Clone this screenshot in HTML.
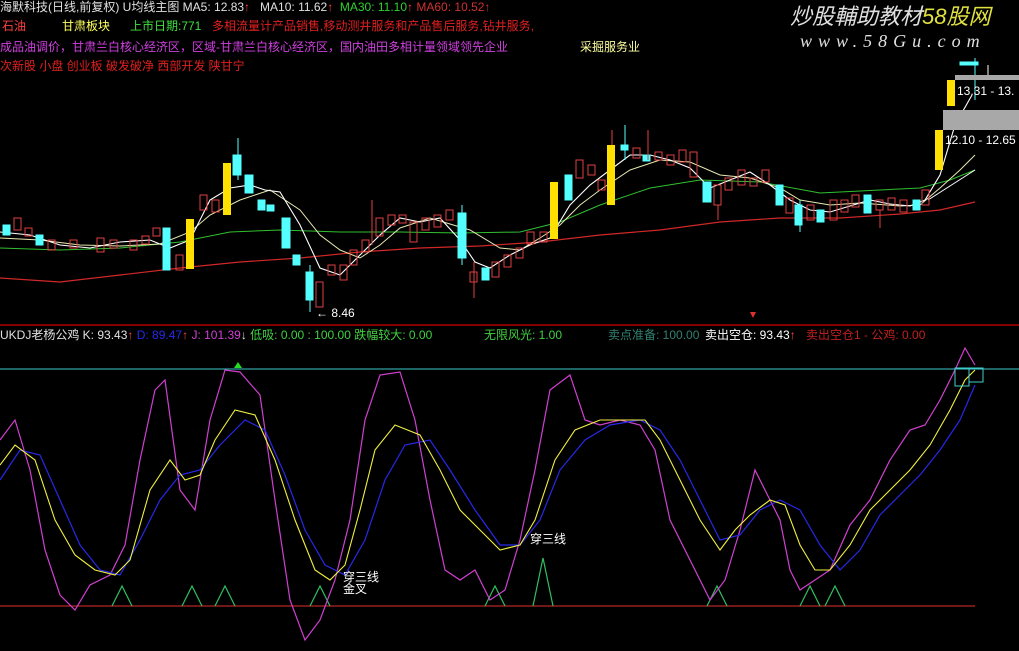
<!DOCTYPE html>
<html><head><meta charset="utf-8"><style>
body{margin:0;background:#000;width:1019px;height:651px;overflow:hidden;font-family:"Liberation Sans","Noto Sans CJK SC",sans-serif;}
.t{position:absolute;font-size:12px;white-space:nowrap;line-height:14px}
</style></head><body>
<svg width="1019" height="651" style="position:absolute;left:0;top:0">
<line x1="0" y1="325" x2="1019" y2="325" stroke="#b00000" stroke-width="1.5"/>
<line x1="0" y1="369" x2="1019" y2="369" stroke="#3cc8c8" stroke-width="1"/>
<line x1="0" y1="606" x2="975" y2="606" stroke="#e03030" stroke-width="1"/>
<!-- MA lines -->
<polyline fill="none" stroke="#d02828" stroke-width="1.2" points="0,278 60,282 120,275 180,268 240,262 300,258 360,252 420,248 480,246 540,242 600,235 660,230 720,222 780,218 840,218 900,214 940,210 975,202"/>
<polyline fill="none" stroke="#30c030" stroke-width="1" points="0,248 60,250 120,248 180,242 230,232 280,230 340,232 400,232 460,233 520,232 560,222 600,205 650,188 700,180 760,182 820,193 880,190 920,188 950,180 975,170"/>
<polyline fill="none" stroke="#e8e8b0" stroke-width="1" points="0,238 40,240 80,245 120,246 160,244 190,232 210,215 240,200 270,190 300,210 320,235 340,250 360,258 380,245 400,228 430,218 470,230 500,248 520,250 540,238 560,225 580,205 600,190 630,170 660,160 690,162 720,175 750,178 780,188 800,200 830,205 860,203 900,206 920,205 940,188 960,170 975,155"/>
<polyline fill="none" stroke="#ffffff" stroke-width="1.1" points="0,232 30,235 60,245 90,248 120,242 150,240 170,248 190,240 210,200 230,188 250,185 265,190 280,192 300,225 320,268 340,275 360,255 380,235 400,218 420,222 440,218 460,240 475,262 490,268 510,255 530,245 550,238 570,205 590,185 610,170 630,155 650,155 670,160 690,168 710,188 730,180 750,172 770,185 790,200 810,210 830,212 850,206 870,200 890,204 910,206 925,200 940,175 955,125 972,95"/>
<line x1="928" y1="200" x2="975" y2="170" stroke="#fff" stroke-width="1"/>
<!-- candles cyan -->
<g fill="#54ffff" stroke="#54ffff">
<rect x="3" y="225" width="7" height="10"/><rect x="36" y="235" width="7" height="10"/><rect x="163" y="228" width="7" height="42"/>
<rect x="233" y="155" width="8" height="20"/><rect x="245" y="175" width="8" height="18"/><rect x="258" y="200" width="7" height="10"/><rect x="267" y="205" width="7" height="6"/>
<rect x="282" y="218" width="8" height="30"/><rect x="293" y="255" width="7" height="10"/><rect x="306" y="272" width="7" height="28"/>
<rect x="458" y="213" width="8" height="45"/><rect x="482" y="268" width="7" height="12"/>
<rect x="565" y="175" width="7" height="25"/><rect x="621" y="145" width="7" height="5"/><rect x="643" y="155" width="7" height="6"/>
<rect x="703" y="182" width="8" height="20"/><rect x="776" y="185" width="7" height="20"/><rect x="795" y="205" width="7" height="20"/><rect x="817" y="210" width="7" height="12"/>
<rect x="864" y="195" width="7" height="18"/><rect x="913" y="200" width="7" height="10"/><rect x="960" y="62" width="18" height="3"/>
</g>
<g stroke="#54ffff" stroke-width="1"><line x1="238" y1="138" x2="238" y2="180"/><line x1="310" y1="265" x2="310" y2="312"/><line x1="462" y1="205" x2="462" y2="265"/><line x1="625" y1="125" x2="625" y2="160"/><line x1="975" y1="58" x2="975" y2="100"/><line x1="800" y1="200" x2="800" y2="232"/></g>
<!-- candles red hollow -->
<g fill="none" stroke="#e04040" stroke-width="1">
<rect x="14" y="218" width="7" height="12"/><rect x="25" y="228" width="7" height="8"/><rect x="48" y="240" width="7" height="10"/><rect x="70" y="240" width="7" height="8"/><rect x="97" y="238" width="7" height="14"/><rect x="110" y="240" width="7" height="8"/><rect x="130" y="240" width="7" height="10"/><rect x="142" y="236" width="7" height="8"/><rect x="153" y="228" width="7" height="8"/><rect x="176" y="255" width="7" height="15"/>
<rect x="200" y="195" width="7" height="15"/><rect x="212" y="200" width="7" height="12"/><rect x="316" y="282" width="7" height="25"/><rect x="328" y="265" width="7" height="10"/><rect x="340" y="265" width="7" height="15"/><rect x="350" y="250" width="7" height="15"/><rect x="362" y="240" width="7" height="12"/><rect x="376" y="218" width="7" height="18"/><rect x="388" y="215" width="7" height="10"/><rect x="399" y="215" width="7" height="8"/><rect x="410" y="222" width="7" height="20"/><rect x="422" y="218" width="7" height="12"/><rect x="434" y="215" width="7" height="12"/><rect x="446" y="210" width="7" height="10"/>
<rect x="470" y="272" width="7" height="10"/><rect x="492" y="262" width="7" height="15"/><rect x="504" y="255" width="7" height="12"/><rect x="516" y="248" width="7" height="10"/><rect x="527" y="232" width="7" height="12"/><rect x="540" y="232" width="7" height="10"/>
<rect x="576" y="160" width="7" height="18"/><rect x="588" y="165" width="7" height="10"/><rect x="598" y="180" width="7" height="10"/><rect x="633" y="148" width="7" height="10"/><rect x="655" y="152" width="7" height="8"/><rect x="667" y="155" width="7" height="10"/><rect x="679" y="150" width="7" height="12"/><rect x="690" y="152" width="7" height="25"/>
<rect x="714" y="185" width="7" height="20"/><rect x="725" y="178" width="7" height="12"/><rect x="738" y="170" width="7" height="15"/><rect x="750" y="178" width="7" height="8"/><rect x="762" y="170" width="7" height="12"/><rect x="786" y="198" width="7" height="15"/><rect x="807" y="205" width="7" height="15"/><rect x="830" y="200" width="7" height="20"/><rect x="841" y="200" width="7" height="12"/><rect x="852" y="195" width="7" height="12"/><rect x="876" y="200" width="7" height="10"/><rect x="888" y="198" width="7" height="12"/><rect x="900" y="200" width="7" height="12"/><rect x="922" y="190" width="7" height="15"/>
<line x1="474" y1="262" x2="474" y2="298"/><line x1="372" y1="200" x2="372" y2="245"/><line x1="612" y1="130" x2="612" y2="160"/><line x1="648" y1="130" x2="648" y2="160"/><line x1="880" y1="210" x2="880" y2="228"/><line x1="718" y1="205" x2="718" y2="220"/>
</g>
<!-- yellow -->
<g fill="#ffe000"><rect x="186" y="219" width="8" height="50"/><rect x="223" y="163" width="8" height="52"/><rect x="550" y="182" width="8" height="57"/><rect x="607" y="145" width="8" height="60"/><rect x="935" y="130" width="8" height="40"/><rect x="947" y="80" width="8" height="26"/></g>
<!-- gray zones -->
<rect x="955" y="75" width="64" height="5" fill="#a8a8a8"/><rect x="943" y="110" width="76" height="20" fill="#a8a8a8"/>
<line x1="988" y1="65" x2="988" y2="75" stroke="#fff"/>
<!-- bottom -->
<g fill="none" stroke="#30c060" stroke-width="1.2">
<polyline points="112,606 122,586 132,606"/><polyline points="182,606 192,586 202,606"/><polyline points="215,606 225,586 235,606"/><polyline points="310,606 320,586 330,606"/><polyline points="485,606 495,586 505,606"/><polyline points="533,606 543,558 553,606"/><polyline points="707,606 717,586 727,606"/><polyline points="800,606 810,586 820,606"/><polyline points="825,606 835,586 845,606"/>
</g>
<polyline fill="none" stroke="#d040d0" stroke-width="1.2" points="0,440 15,420 30,470 45,550 60,595 75,610 90,585 110,575 125,545 140,460 155,390 165,380 180,490 195,510 210,420 225,370 240,372 260,395 275,500 290,600 305,640 320,620 335,580 350,520 365,420 380,375 400,372 415,420 430,500 445,570 460,580 475,570 490,600 505,590 520,540 535,470 550,390 570,375 585,420 600,425 620,420 640,425 655,450 670,520 690,560 710,600 725,580 740,530 755,470 765,490 780,520 790,570 800,590 815,580 830,570 850,525 870,500 890,460 910,430 925,425 940,400 955,370 965,348 975,365"/>
<polyline fill="none" stroke="#2828e8" stroke-width="1.2" points="0,480 20,450 40,455 60,500 80,545 100,570 120,575 140,540 160,500 180,475 200,470 220,445 245,420 265,430 285,475 305,530 325,565 345,575 365,540 385,480 405,445 430,440 450,470 475,510 500,545 520,545 540,520 560,470 585,440 610,425 640,420 660,430 680,460 700,500 720,540 740,535 760,510 780,500 800,510 820,545 840,570 860,550 880,515 900,495 920,475 940,450 960,420 975,385"/>
<polyline fill="none" stroke="#f0f040" stroke-width="1.1" points="0,465 15,445 35,460 55,520 75,555 95,570 115,575 130,560 150,490 170,460 185,480 200,475 215,440 235,410 255,415 275,460 295,520 315,570 330,580 345,565 360,510 375,450 395,425 420,435 440,470 460,510 480,530 500,550 520,545 535,520 555,460 575,430 600,420 625,420 645,420 660,440 680,480 700,520 720,550 735,530 750,515 770,500 785,505 800,545 815,570 830,570 850,545 870,510 890,490 910,470 930,445 950,410 965,380 975,370"/>
<rect x="955" y="368" width="14" height="18" fill="none" stroke="#40d0d0"/><rect x="969" y="368" width="14" height="14" fill="none" stroke="#40d0d0"/>
<polygon points="234,368 242,368 238,362" fill="#20e020"/>
<polygon points="750,312 756,312 753,318" fill="#e03030"/>
</svg>
<div class="t" style="left:0;top:1;color:#e0e0e0">海默科技(日线,前复权) U均线主图 <span>MA5: 12.83</span><span style="color:#f44">↑</span> &nbsp; MA10: 11.62<span style="color:#f44">↑</span> &nbsp;<span style="color:#30d030">MA30: 11.10</span><span style="color:#f44">↑</span> <span style="color:#d03030">MA60: 10.52↑</span></div>
<div class="t" style="left:2;top:19px;left:2px;color:#ff4040">石油</div>
<div class="t" style="left:62px;top:19px;color:#ffff60">甘肃板块</div>
<div class="t" style="left:130px;top:19px;color:#40e040">上市日期:771</div>
<div class="t" style="left:212px;top:19px;color:#e02020">多相流量计产品销售,移动测井服务和产品售后服务,钻井服务,</div>
<div class="t" style="left:0;top:40px;color:#d040e0">成品油调价，甘肃兰白核心经济区，区域-甘肃兰白核心经济区，国内油田多相计量领域领先企业</div>
<div class="t" style="left:580px;top:40px;color:#ffffa0">采掘服务业</div>
<div class="t" style="left:0;top:59px;color:#e02020">次新股 小盘 创业板 破发破净 西部开发 陕甘宁</div>
<div class="t" style="left:790px;top:4px;font-size:22px;line-height:26px;color:#e0e0e0;font-style:italic">炒股輔助教材<span style="color:#e0e040">58股网</span></div>
<div class="t" style="left:800px;top:34px;font-size:18px;letter-spacing:6px;color:#e0e0e0;font-style:italic;font-family:'Liberation Serif',serif">www.58Gu.com</div>
<div class="t" style="left:957px;top:84px;color:#fff">13.31 - 13.</div>
<div class="t" style="left:945px;top:133px;color:#fff">12.10 - 12.65</div>
<div class="t" style="left:316px;top:306px;color:#fff">← 8.46</div>
<div class="t" style="left:0;top:328px;color:#e0e0e0">UKDJ老杨公鸡 K: 93.43<span style="color:#f44">↑</span> <span style="color:#2828e8">D: 89.47</span><span style="color:#f44">↑</span> <span style="color:#d040d0">J: 101.39</span>↓ <span style="color:#40d040">低吸: 0.00 : 100.00 跌幅较大: 0.00</span></div>
<div class="t" style="left:484px;top:328px;color:#40d040">无限风光: 1.00</div>
<div class="t" style="left:608px;top:328px;color:#308070">卖点准备: 100.00</div>
<div class="t" style="left:705px;top:328px;color:#fff">卖出空仓: 93.43<span style="color:#f44">↑</span></div>
<div class="t" style="left:806px;top:328px;color:#c02020">卖出空仓1 - 公鸡: 0.00</div>
<div class="t" style="left:530px;top:532px;color:#fff">穿三线</div>
<div class="t" style="left:343px;top:570px;color:#fff">穿三线</div>
<div class="t" style="left:343px;top:582px;color:#fff">金叉</div>
</body></html>
